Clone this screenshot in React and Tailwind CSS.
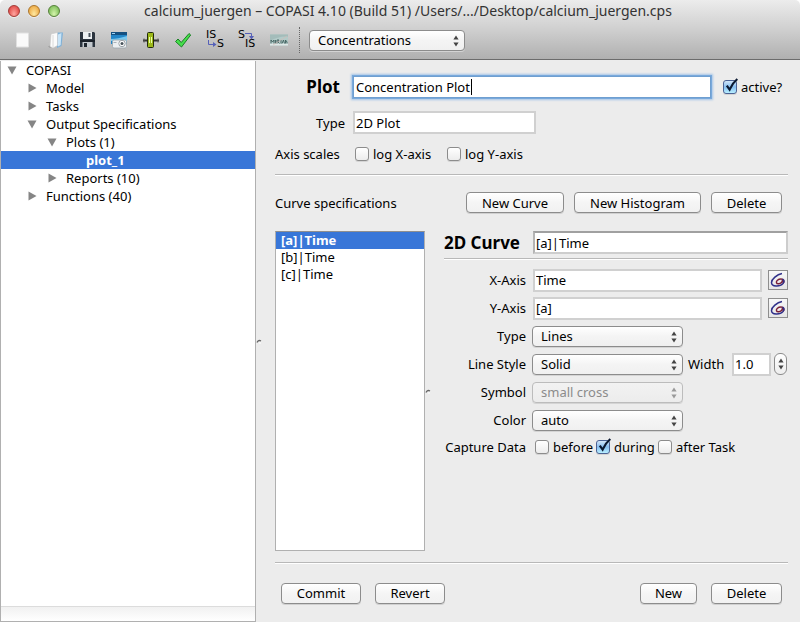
import React from "react";

const FONT = "font-['Noto_Sans','Open_Sans',sans-serif]";

function UpDown() {
  return (
    <svg width="6" height="12" viewBox="0 0 6 12" fill="currentColor" aria-hidden="true">
      <path d="M3 0.500 5.600 4.500H.4zM3 11.500.4 7.500h5.200z" />
    </svg>
  );
}

function Select({ id, value, disabled, className = "", label }) {
  return (
    <div className={`relative ${disabled ? "text-[#8b8b8b]" : "text-black"} ${className}`}>
      <select
        id={id}
        aria-label={label}
        disabled={disabled}
        defaultValue={value}
        className="block h-[21px] w-full appearance-none rounded-[4px] border border-[#8c8c8c] bg-gradient-to-b from-white via-[#f4f4f4] to-[#f0f0f0] pr-5 pl-2 text-[13px] leading-[18px] opacity-100 shadow-[0_1px_0_#d4d4d4] disabled:border-[#bcbcbc] disabled:from-[#f2f2f2] disabled:via-[#efefef] disabled:to-[#ececec]"
      >
        <option>{value}</option>
      </select>
      <span className={`pointer-events-none absolute top-[5px] right-[6px] ${disabled ? "text-[#999]" : "text-[#444]"}`}>
        <UpDown />
      </span>
    </div>
  );
}

function Field({ className = "", strong, ...props }) {
  return (
    <input
      type="text"
      className={`h-[23px] min-w-0 border-2 bg-white px-px text-[13px] leading-4 outline-none ${
        strong ? "border-[#cdcdcd] border-t-[#a0a0a0] border-l-[#b4b4b4]" : "border-[#d0d0d0]"
      } ${className}`}
      {...props}
    />
  );
}

function Check({ id, label, checked, className = "" }) {
  return (
    <label htmlFor={id} className={`flex items-center gap-1 whitespace-nowrap ${className}`}>
      <span className="relative block size-[14px]">
        <input
          id={id}
          type="checkbox"
          defaultChecked={checked}
          className="block size-[14px] appearance-none rounded-[3px] border border-[#8c8c8c] bg-gradient-to-b from-white to-[#ececec] shadow-[0_1px_0_#d4d4d4] checked:border-[#4c6294] checked:from-[#d3e6f8] checked:via-[#86bdf0] checked:to-[#b9f0ff]"
        />
        {checked && (
          <svg className="pointer-events-none absolute -top-[3px] left-0" width="17" height="17" viewBox="0 0 17 17" fill="none" aria-hidden="true">
            <path d="M3.8 8.6 6.6 12.6Q9.500 6 14.300 2" stroke="#0b1830" strokeWidth="2.200" />
          </svg>
        )}
      </span>
      {label}
    </label>
  );
}

function Button({ children, className = "" }) {
  return (
    <button
      type="button"
      className={`h-[21px] rounded-[4px] border border-[#8c8c8c] bg-gradient-to-b from-white via-[#f5f5f5] to-[#f1f1f1] text-[13px] leading-[18px] whitespace-nowrap shadow-[0_1px_0_#d0d0d0] ${className}`}
    >
      {children}
    </button>
  );
}

function Rule() {
  return <div className="h-[2px] border-b border-white bg-[#b8b8b8]" />;
}

function Triangle({ open }) {
  return (
    <svg width="10" height="10" viewBox="0 0 10 10" fill="#858585" aria-hidden="true">
      {open ? <path d="M0.500 1.500h9L5 9.500z" /> : <path d="M1.500 0.500v9L9.500 5z" />}
    </svg>
  );
}

const TREE = [
  { label: "COPASI", pad: "pl-[6px]", open: true },
  { label: "Model", pad: "pl-[26px]", open: false },
  { label: "Tasks", pad: "pl-[26px]", open: false },
  { label: "Output Specifications", pad: "pl-[26px]", open: true },
  { label: "Plots (1)", pad: "pl-[46px]", open: true },
  { label: "plot_1", pad: "pl-[66px]", selected: true },
  { label: "Reports (10)", pad: "pl-[46px]", open: false },
  { label: "Functions (40)", pad: "pl-[26px]", open: false },
];

function Sidebar() {
  return (
    <nav aria-label="Model tree" className="flex w-[256px] shrink-0 flex-col border-x border-b border-[#b0b0b0] bg-white">
      <ul className="grow">
        {TREE.map((n) => (
          <li key={n.label}>
            <button
              type="button"
              className={`flex h-[18px] w-full items-center text-left text-[13px] leading-[18px] ${n.pad} ${
                n.selected ? "bg-[#3876d8] font-bold text-white" : ""
              }`}
            >
              <span className="w-[19px] shrink-0">{!n.selected && <Triangle open={n.open} />}</span>
              {n.label}
            </button>
          </li>
        ))}
      </ul>
      <div className="h-[15px] border-t border-[#dcdcdc] bg-gradient-to-b from-[#f1f1f1] to-white" />
    </nav>
  );
}

function Light({ className, label }) {
  return (
    <button
      type="button"
      aria-label={label}
      className={`size-[12px] rounded-full border shadow-[0_1px_0_rgba(255,255,255,0.5)] ${className}`}
    />
  );
}

const ICONS = [
  {
    name: "New",
    art: <path d="M4.500 4h12v14h-12z" fill="#fafafa" stroke="#e0e0e0" />,
  },
  {
    name: "Open",
    art: (
      <>
        <path d="M4 17.500 9 15l1 3-4 1z" fill="#8a8a8a" opacity=".6" />
        <path d="M13 3.500h6L17.500 17 13 19z" fill="#7fb1d8" />
        <path d="M14 5.500 17.500 4l-.8 12-2.700 1.500z" fill="#c9e4f7" />
        <path d="M7 5l6.500-1.500v13L9 19l-3-1.500z" fill="#fbfbfb" stroke="#c8c8c8" strokeWidth=".6" />
        <path d="M9 6v12.500" stroke="#dadada" />
      </>
    ),
  },
  {
    name: "Save",
    art: (
      <>
        <path d="M4 3h14l1 1v14H4z" fill="#2c353f" />
        <path d="M7 3h9v7H7z" fill="#eef1f3" />
        <path d="M12.500 4h2v4h-2z" fill="#4a545e" />
        <path d="M4 11h15v2H4z" fill="#1b2129" />
        <path d="M6.500 13h10v5h-10z" fill="#c3c9ce" />
        <path d="M8 14h3v4H8z" fill="#1f262e" />
      </>
    ),
  },
  {
    name: "Capture",
    art: (
      <>
        <path d="M3 3h16v12H3z" fill="#2386c8" />
        <path d="M3 3h16v3H3z" fill="#155080" />
        <path d="M4 4.500h3" stroke="#9fd4f5" />
        <path d="M3 10q7 0 16-3v5H3z" fill="#79c8ef" />
        <rect x="4.500" y="11" width="14" height="8" rx="1.500" fill="#eceff1" stroke="#9ca6ac" strokeWidth=".8" />
        <path d="M5.500 13.500h3" stroke="#aab2b8" />
        <circle cx="14" cy="14.500" r="3.200" fill="#fff" stroke="#9aa2a8" />
        <circle cx="14" cy="14.500" r="1.500" fill="#47525a" />
      </>
    ),
  },
  {
    name: "Slider",
    art: (
      <>
        <path d="M3 11.500h16" stroke="#343434" strokeWidth="2" />
        <path d="M4 9.500v4M18 9.500v4" stroke="#555" />
        <rect x="7.500" y="3.500" width="6" height="15" rx="1" fill="#9bb719" stroke="#222b0b" />
        <path d="M9.500 8v6M11.500 8v6" stroke="#edffad" />
      </>
    ),
  },
  {
    name: "Check",
    art: (
      <path d="m3.500 12.500 2.500-2.500 3.200 3.500L17 4.500l1.700 1.500L9.500 18z" fill="#46df4c" stroke="#1a7f24" strokeLinejoin="round" />
    ),
  },
];

function Toolbar() {
  return (
    <div className="flex h-[37px] items-center px-[12px] pb-px">
      <div className="flex gap-[10px]">
        {ICONS.map((i) => (
          <button key={i.name} type="button" aria-label={i.name} className="w-[22px]">
            <svg width="22" height="22" viewBox="0 0 22 22" aria-hidden="true">
              {i.art}
            </svg>
          </button>
        ))}
        <button type="button" className="relative h-[22px] w-[22px] font-['DejaVu_Sans',sans-serif] text-[11px] leading-[10px]">
          <span className="absolute top-px left-[2px]">IS</span>
          <span className="absolute top-[10px] left-[13px]">S</span>
          <svg className="absolute top-[11px] left-[3px]" width="10" height="9" viewBox="0 0 10 9" fill="none" stroke="#5560b8" aria-hidden="true">
            <path d="M1.500 0v4.500h6" />
            <path d="m6 2 3.500 2.500L6 7z" fill="#5560b8" stroke="none" />
          </svg>
        </button>
        <button type="button" className="relative h-[22px] w-[22px] font-['DejaVu_Sans',sans-serif] text-[11px] leading-[10px]">
          <span className="absolute top-px left-[2px]">S</span>
          <span className="absolute top-[10px] left-[9px]">IS</span>
          <svg className="absolute top-[2px] left-[9px]" width="10" height="9" viewBox="0 0 10 9" fill="none" stroke="#5560b8" aria-hidden="true">
            <path d="M0 2.500h6.500V6" />
            <path d="M4 5h5L6.500 8.500z" fill="#5560b8" stroke="none" />
          </svg>
        </button>
        <button type="button" aria-label="Miriam" className="w-[22px]">
          <svg width="22" height="22" viewBox="0 0 22 22" aria-hidden="true">
            <path d="M2 5.500h18v11H2z" fill="#b3cbc9" />
            <path d="M2 5.500h18v2Q10 7 2 12z" fill="#a3bcba" />
            <path d="M2 14.500h18v2H2z" fill="#dfe8e7" />
            <path d="M3 14.500V11l1.500 2L6 11v3.500M7.500 11v3.500M9 14.500V11h2l-1 2 1.500 1.500M13 11v3.500M14 14.500l1.500-3.500 1 3.500M17.500 14.500V11l1.500 2v1.500" fill="none" stroke="#41615f" strokeWidth=".9" />
            <path d="M5 16 19 7" stroke="#d9b9b4" strokeWidth=".6" />
          </svg>
        </button>
      </div>
      <div className="ml-[9px] h-[26px] border-l border-dotted border-[#666]" />
      <Select className="ml-[9px] w-[156px]" label="Display" value="Concentrations" />
    </div>
  );
}

function Header() {
  return (
    <header className="rounded-t-[5px] border-b border-[#6c6c6c] bg-gradient-to-b from-[#ececec] via-[#cfcfcf] to-[#b0b0b0]">
      <div className="flex h-[22px] items-center px-2">
        <div className="flex w-[60px] shrink-0 gap-2">
          <Light label="Close" className="border-[#a33a36] bg-radial-[at_50%_80%] from-[#ffa6a0] to-[#d9332f]" />
          <Light label="Minimize" className="border-[#ab752b] bg-radial-[at_50%_80%] from-[#ffe9a0] to-[#e8992c]" />
          <Light label="Zoom" className="border-[#55803a] bg-radial-[at_50%_80%] from-[#d5f5ac] to-[#69b145]" />
        </div>
        <h1 className="grow pr-[44px] text-center text-[14px] whitespace-nowrap text-[#333]">
          calcium_juergen – COPASI 4.10 (Build 51) /Users/.../Desktop/calcium_juergen.cps
        </h1>
      </div>
      <Toolbar />
    </header>
  );
}

function Handle() {
  return (
    <svg width="6" height="5" viewBox="0 0 6 5" aria-hidden="true">
      <path d="M1 3.500Q2.500.5 5 2" fill="none" stroke="#666" strokeWidth="1.300" />
      <path d="M3 4h2" stroke="#fff" />
    </svg>
  );
}

function PickButton({ label }) {
  return (
    <button type="button" aria-label={label} className="size-5 shrink-0 border border-[#8e8e8e] bg-gradient-to-b from-[#f8f8f8] to-[#e6e6e6]">
      <svg width="18" height="18" viewBox="0 0 18 18" fill="none" strokeWidth="1.500" aria-hidden="true">
        <path d="M13 2.500C8 3.500 2.500 8 2.500 11.500c0 4.500 8.500 4.500 11.500 1" stroke="#30308a" />
        <path d="M14 12.500c2-2.500.5-4.500-2-4.500-3 0-5 2-4.500 3.700.5 1.600 3.500 1.300 5-.2 1-1 1-2 .5-2.500" stroke="#7a2038" />
        <path d="M14 12.500c1.600-2 1-3.700-.6-4.300" stroke="#30308a" />
      </svg>
    </button>
  );
}

function Row({ label, htmlFor, children }) {
  return (
    <div className="flex h-7 items-center">
      <label htmlFor={htmlFor} className="w-[82px] shrink-0 text-right whitespace-nowrap">
        {label}
      </label>
      <div className="ml-[6px] flex min-w-0 grow items-center">{children}</div>
    </div>
  );
}

function CurveEditor() {
  return (
    <section className="min-w-0 grow">
      <div className="flex items-center">
        <label htmlFor="curve" className="w-[89px] shrink-0 text-[17px] leading-[23px] font-bold whitespace-nowrap">
          2D Curve
        </label>
        <Field id="curve" strong defaultValue="[a]|Time" className="grow" />
      </div>
      <div className="pt-1 pb-[6px]">
        <Rule />
      </div>
      <Row label="X-Axis" htmlFor="xaxis">
        <Field id="xaxis" readOnly defaultValue="Time" className="mr-[6px] ml-px grow" />
        <PickButton label="Choose X-Axis" />
      </Row>
      <Row label="Y-Axis" htmlFor="yaxis">
        <Field id="yaxis" readOnly defaultValue="[a]" className="mr-[6px] ml-px grow" />
        <PickButton label="Choose Y-Axis" />
      </Row>
      <Row label="Type" htmlFor="ctype">
        <Select id="ctype" value="Lines" className="w-[151px]" />
      </Row>
      <Row label="Line Style" htmlFor="lstyle">
        <Select id="lstyle" value="Solid" className="w-[151px] shrink-0" />
        <label htmlFor="lwidth" className="ml-[5px] w-[44px] shrink-0">
          Width
        </label>
        <Field id="lwidth" defaultValue="1.0" className="w-[39px] shrink-0" />
        <button type="button" aria-label="Step width" className="ml-[3px] flex h-[22px] w-[13px] shrink-0 items-center justify-center rounded-[6px] border border-[#8c8c8c] bg-gradient-to-b from-white to-[#eee] text-[#444]">
          <UpDown />
        </button>
      </Row>
      <Row label="Symbol" htmlFor="symbol">
        <Select id="symbol" disabled value="small cross" className="w-[151px]" />
      </Row>
      <Row label="Color" htmlFor="color">
        <Select id="color" value="auto" className="w-[151px]" />
      </Row>
      <div role="group" className="flex h-[26px] items-center" aria-label="Capture Data">
        <span className="w-[82px] shrink-0 text-right whitespace-nowrap">Capture Data</span>
        <div className="ml-[9px] flex">
          <Check id="before" label="before" className="w-[61px]" />
          <Check id="during" label="during" checked className="w-[62px]" />
          <Check id="after" label="after Task" />
        </div>
      </div>
    </section>
  );
}

function Main() {
  return (
    <main className="flex min-w-0 grow flex-col pr-3">
      <div className="flex items-center pt-[14px]">
        <label htmlFor="plot" className="w-[65px] shrink-0 text-right text-[17px] leading-6 font-bold">
          Plot
        </label>
        <div className="relative ml-[13px] grow">
          <input
            id="plot"
            type="text"
            defaultValue="Concentration Plot"
            className="block h-[22px] w-full border border-[#6f9fd0] bg-white px-[2px] text-[13px] leading-4 shadow-[0_0_0_1px_#79a9dc,0_0_2px_2px_#a4c5e8] outline-none"
          />
          <span className="pointer-events-none absolute top-[3px] left-[118px] h-4 w-px bg-black" />
        </div>
        <Check id="active" label="active?" checked className="ml-3 w-[65px]" />
      </div>
      <div className="flex items-center pt-3">
        <label htmlFor="ptype" className="w-[70px] text-right">
          Type
        </label>
        <Field id="ptype" readOnly defaultValue="2D Plot" className="ml-2 w-[183px]" />
      </div>
      <div role="group" className="flex h-[40px] items-center" aria-label="Axis scales">
        <span className="w-[80px]">Axis scales</span>
        <Check id="logx" label="log X-axis" className="w-[92px]" />
        <Check id="logy" label="log Y-axis" />
      </div>
      <Rule />
      <div className="flex h-[55px] items-center gap-[10px] pr-[6px] pb-[2px]">
        <span className="grow">Curve specifications</span>
        <Button className="w-[98px]">New Curve</Button>
        <Button className="w-[127px]">New Histogram</Button>
        <Button className="w-[71px]">Delete</Button>
      </div>
      <div className="flex grow">
        <ul className="w-[150px] shrink-0 border border-[#b0b0b0] border-t-[#8f8f8f] bg-white leading-[17px]">
          <li className="bg-[#3876d8] px-[5px] font-bold text-white">[a]|Time</li>
          <li className="px-[5px]">[b]|Time</li>
          <li className="px-[5px]">[c]|Time</li>
        </ul>
        <div className="flex w-[19px] shrink-0 items-center">
          <Handle />
        </div>
        <CurveEditor />
      </div>
      <div className="pt-[11px]">
        <Rule />
      </div>
      <div className="flex h-[58px] items-center gap-[14px] px-[6px]">
        <Button className="w-[80px]">Commit</Button>
        <Button className="w-[70px]">Revert</Button>
        <Button className="ml-auto w-[57px]">New</Button>
        <Button className="w-[71px]">Delete</Button>
      </div>
    </main>
  );
}

export default function App() {
  return (
    <div className={`flex min-h-screen flex-col bg-white text-[13px] leading-[18px] text-black ${FONT}`}>
      <Header />
      <div className="flex grow bg-[#ececec] pt-px">
        <Sidebar />
        <div className="flex w-[19px] shrink-0 items-center">
          <Handle />
        </div>
        <Main />
      </div>
    </div>
  );
}
